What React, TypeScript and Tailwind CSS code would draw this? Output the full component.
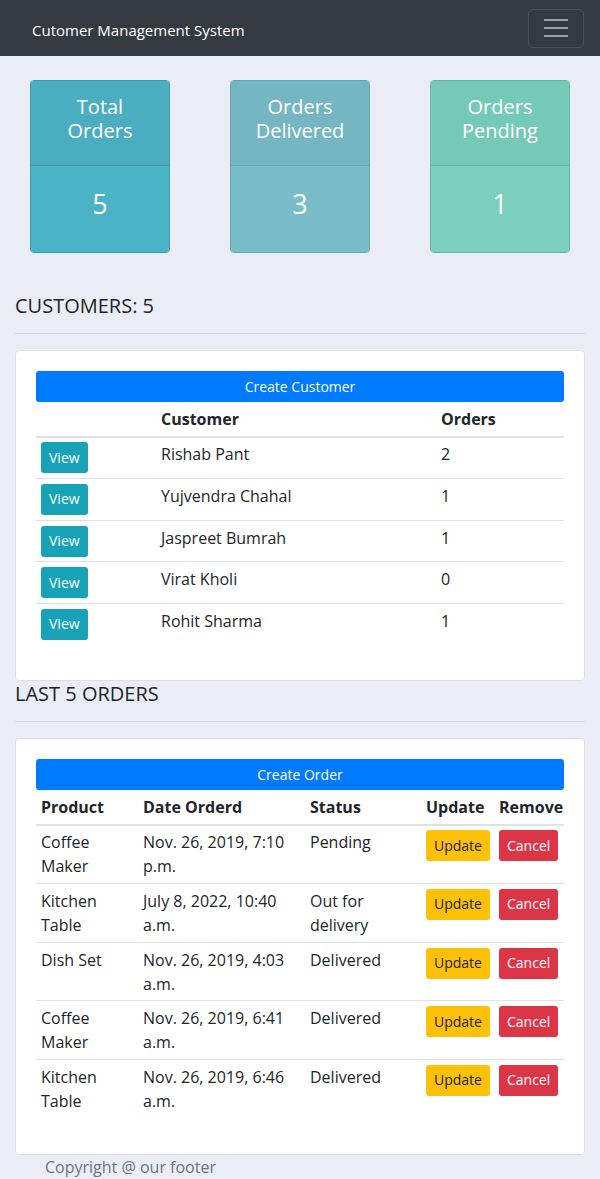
import React from "react";

const FONT = { fontFamily: '"Open Sans", "Noto Sans", sans-serif' };

const STATS = [
  { title: ["Total", "Orders"], value: 5, head: "bg-[#4aadc0]", body: "bg-[#4bb3c6]", edge: "border-[#3f9cae]" },
  { title: ["Orders", "Delivered"], value: 3, head: "bg-[#74b6c2]", body: "bg-[#79bdc8]", edge: "border-[#67a5b1]" },
  { title: ["Orders", "Pending"], value: 1, head: "bg-[#75c9b7]", body: "bg-[#7bcfbe]", edge: "border-[#69b6a5]" },
];

const CUSTOMERS = [
  ["Rishab Pant", 2],
  ["Yujvendra Chahal", 1],
  ["Jaspreet Bumrah", 1],
  ["Virat Kholi", 0],
  ["Rohit Sharma", 1],
] as const;

const ORDERS = [
  ["Coffee Maker", "Nov. 26, 2019, 7:10 p.m.", "Pending"],
  ["Kitchen Table", "July 8, 2022, 10:40 a.m.", "Out for delivery"],
  ["Dish Set", "Nov. 26, 2019, 4:03 a.m.", "Delivered"],
  ["Coffee Maker", "Nov. 26, 2019, 6:41 a.m.", "Delivered"],
  ["Kitchen Table", "Nov. 26, 2019, 6:46 a.m.", "Delivered"],
];

function SectionTitle({ children }: { children: React.ReactNode }) {
  return (
    <div className="mx-[15px]">
      <h5 className="text-[20px] leading-[24px] text-[#212529]">{children}</h5>
      <hr className="mt-[15px] mb-[16px] border-t border-[#d5d8de]" />
    </div>
  );
}

export default function App() {
  return (
    <div className="min-h-[1179px] bg-[#eaedf5] text-[16px] leading-[24px] text-[#212529]" style={FONT}>
      <nav className="flex h-[56px] items-center justify-between bg-[#343a40] pl-[32px] pr-[16px]">
        <span className="mt-[4px] text-[15px] text-white">Cutomer Management System</span>
        <button className="flex h-[39px] w-[56px] flex-col items-center justify-center gap-[6px] rounded-[5px] border border-[#4a5057]">
          <span className="block h-[2px] w-[24px] bg-[#9a9da1]" />
          <span className="block h-[2px] w-[24px] bg-[#9a9da1]" />
          <span className="block h-[2px] w-[24px] bg-[#9a9da1]" />
        </button>
      </nav>

      <div className="flex justify-between px-[30px] pt-[24px]">
        {STATS.map((s) => (
          <div key={s.value} className={`w-[140px] overflow-hidden rounded-[4px] border ${s.edge} text-center text-white`}>
            <div className={`h-[85px] border-b ${s.edge} ${s.head} pt-[14px] text-[20px]`}>
              <div className="leading-[24px]">{s.title[0]}</div>
              <div className="leading-[24px]">{s.title[1]}</div>
            </div>
            <div className={`h-[86px] ${s.body} pt-[20px] text-[27px] leading-[36px]`}>{s.value}</div>
          </div>
        ))}
      </div>

      <div className="h-[41px]" />
      <SectionTitle>CUSTOMERS: 5</SectionTitle>

      <div className="mx-[15px] h-[331px] rounded-[4px] border border-[#dcdfe3] bg-white px-[20px] pt-[20px]">
        <button className="block h-[31px] w-full rounded-[3px] bg-[#007bff] text-[14px] text-white">Create Customer</button>
        <table className="w-full table-fixed border-collapse text-left">
          <thead>
            <tr className="border-b-2 border-[#dee2e6]">
              <th className="w-[120px] px-[5px] py-[4.8px]"></th>
              <th className="w-[280px] px-[5px] py-[4.8px] font-bold">Customer</th>
              <th className="px-[5px] py-[4.8px] font-bold">Orders</th>
            </tr>
          </thead>
          <tbody>
            {CUSTOMERS.map(([name, n]) => (
              <tr key={name} className="border-b border-[#dee2e6] last:border-b-0">
                <td className="px-[5px] py-[4.8px]">
                  <button className="block h-[31px] rounded-[3px] bg-[#17a2b8] px-[8px] text-[14px] text-white">View</button>
                </td>
                <td className="px-[5px] py-[4.8px] align-top">{name}</td>
                <td className="px-[5px] py-[4.8px] align-top">{n}</td>
              </tr>
            ))}
          </tbody>
        </table>
      </div>

      <div className="h-[1px]" />
      <SectionTitle>LAST 5 ORDERS</SectionTitle>

      <div className="mx-[15px] h-[417px] rounded-[4px] border border-[#dcdfe3] bg-white px-[20px] pt-[20px]">
        <button className="block h-[31px] w-full rounded-[3px] bg-[#007bff] text-[14px] text-white">Create Order</button>
        <table className="w-full table-fixed border-collapse text-left">
          <thead>
            <tr className="border-b-2 border-[#dee2e6]">
              <th className="w-[102px] px-[5px] py-[4.8px] font-bold">Product</th>
              <th className="w-[167px] px-[5px] py-[4.8px] font-bold">Date Orderd</th>
              <th className="w-[116px] px-[5px] py-[4.8px] font-bold">Status</th>
              <th className="w-[73px] px-[5px] py-[4.8px] font-bold">Update</th>
              <th className="px-[5px] py-[4.8px] font-bold">Remove</th>
            </tr>
          </thead>
          <tbody>
            {ORDERS.map(([p, d, s], i) => (
              <tr key={i} className="border-b border-[#dee2e6] last:border-b-0 align-top">
                <td className="px-[5px] py-[4.8px]">{p}</td>
                <td className="px-[5px] py-[4.8px]">{d}</td>
                <td className="px-[5px] py-[4.8px]">{s}</td>
                <td className="px-[5px] py-[4.8px]">
                  <button className="block h-[31px] rounded-[3px] bg-[#ffc107] px-[8px] text-[14px] text-[#212529]">Update</button>
                </td>
                <td className="px-[5px] py-[4.8px]">
                  <button className="block h-[31px] rounded-[3px] bg-[#dc3545] px-[8px] text-[14px] text-white">Cancel</button>
                </td>
              </tr>
            ))}
          </tbody>
        </table>
      </div>

      <p className="ml-[45px] text-[16px] text-[#6c757d]">Copyright @ our footer</p>
    </div>
  );
}
